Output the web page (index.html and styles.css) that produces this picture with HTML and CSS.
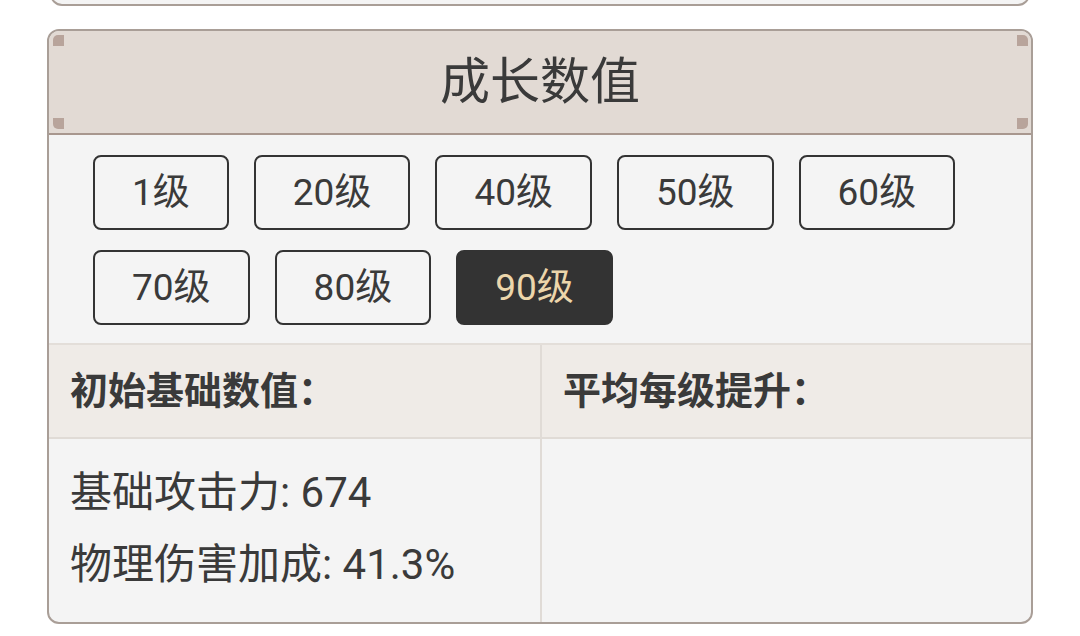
FILE: index.html
```html
<!DOCTYPE html>
<html lang="zh-CN">
<head>
  <meta charset="UTF-8">
  <meta name="viewport" content="width=device-width, initial-scale=1.0">
  <title>成长数值</title>
  <link rel="stylesheet" href="styles.css">
</head>
<body>
  <div class="page">
    <div class="card card-prev"></div>

    <section class="card">
      <div class="card-head">
        <span class="deco tl"></span>
        <span class="deco bl"></span>
        <span class="deco tr"></span>
        <span class="deco br"></span>
        <h2 class="card-title">成长数值</h2>
      </div>

      <div class="levels">
        <button class="level">1级</button>
        <button class="level">20级</button>
        <button class="level">40级</button>
        <button class="level">50级</button>
        <button class="level">60级</button>
        <button class="level">70级</button>
        <button class="level">80级</button>
        <button class="level active">90级</button>
      </div>

      <div class="stats">
        <div class="stats-head">初始基础数值：</div>
        <div class="stats-head right">平均每级提升：</div>
        <div class="stats-cell">
          <p>基础攻击力: 674</p>
          <p>物理伤害加成: 41.3%</p>
        </div>
        <div class="stats-cell right"></div>
      </div>
    </section>
  </div>
</body>
</html>
```

FILE: styles.css
```css
* {
  box-sizing: border-box;
}

body {
  margin: 0;
  background: #ffffff;
  font-family: Roboto, "Noto Sans CJK SC", sans-serif;
  color: #3a3a3a;
  overflow: hidden;
}

.page {
  padding: 0 47px;
}

.card {
  background: #f4f4f4;
  border: 2px solid #a99e97;
  border-radius: 12px;
  overflow: hidden;
}

.card-prev {
  height: 31px;
  margin: -25px 3px 23px;
}

.card-head {
  position: relative;
  height: 104px;
  background: #e2dad4;
  border-bottom: 2px solid #a8978e;
  display: flex;
  align-items: center;
  justify-content: center;
}

.card-title {
  margin: 0;
  font-size: 50px;
  font-weight: 400;
  line-height: 1;
  color: #3a3a3a;
}

.deco {
  position: absolute;
  width: 11px;
  height: 11px;
  background: #b8a49b;
}

.deco.tl { top: 4px; left: 4px; border-top-left-radius: 5px; }
.deco.bl { bottom: 4px; left: 4px; border-bottom-left-radius: 5px; }
.deco.tr { top: 4px; right: 3px; border-top-right-radius: 5px; }
.deco.br { bottom: 4px; right: 3px; border-bottom-right-radius: 5px; }

.levels {
  display: flex;
  flex-wrap: wrap;
  gap: 20px 25px;
  padding: 20px 44px 18px;
}

.level {
  height: 75px;
  padding: 0 37px;
  border: 2px solid #333333;
  border-radius: 8px;
  background: transparent;
  font-family: Roboto, "Noto Sans CJK SC", sans-serif;
  font-size: 37px;
  line-height: 1;
  color: #3a3a3a;
}

.level.active {
  background: #333333;
  color: #ecd6ab;
}

.stats {
  display: grid;
  grid-template-columns: 1fr 1fr;
  border-top: 2px solid #e3ded9;
}

.stats-head {
  background: #efebe7;
  padding: 18px 21px;
  font-size: 38px;
  font-weight: 700;
  line-height: 56px;
  border-bottom: 2px solid #e0dbd6;
}

.stats-cell {
  padding: 18px 21px 21px;
  font-size: 42px;
  line-height: 72px;
}

.stats-cell p {
  margin: 0;
}

.right {
  border-left: 2px solid #e0dbd6;
}
```
